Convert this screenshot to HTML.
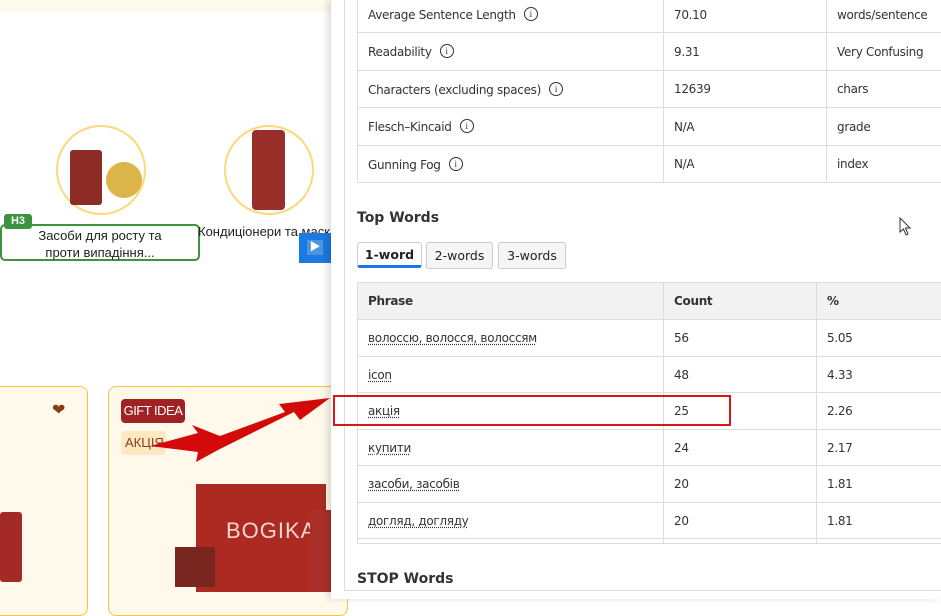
<!DOCTYPE html>
<html><head><meta charset="utf-8"><style>
*{margin:0;padding:0;box-sizing:border-box}
body{width:941px;height:599px;overflow:hidden;background:#fff;font-family:"Liberation Sans","Noto Sans CJK SC",sans-serif;position:relative}
.abs{position:absolute}
table{border-collapse:collapse;position:absolute;left:357px;table-layout:fixed}
td,th{border:1px solid #ddd;padding:0 10px;text-align:left;font-family:"DejaVu Sans",sans-serif;font-size:12px;color:#333;font-weight:normal;letter-spacing:-0.3px;white-space:nowrap;overflow:hidden}
th{background:#f2f2f2;font-weight:bold}
.i{display:inline-block;width:14px;height:14px;border:1.3px solid #333;border-radius:50%;font-size:9px;text-align:center;line-height:12px;margin-left:8px;vertical-align:2px;font-family:"Liberation Serif",serif}
.u{text-decoration:underline dotted;text-underline-offset:2px}
</style></head><body>
<div class="abs" style="left:0;top:0;width:331px;height:12px;background:#fffaee"></div>
<div class="abs" style="left:56px;top:125px;width:90px;height:90px;border:2px solid #fcd87a;border-radius:50%;background:#fff"></div>
<div class="abs" style="left:70px;top:150px;width:32px;height:55px;background:#8d2b25;border-radius:3px"></div>
<div class="abs" style="left:106px;top:162px;width:36px;height:36px;background:#dcb54a;border-radius:50%"></div>
<div class="abs" style="left:224px;top:125px;width:90px;height:90px;border:2px solid #fcd87a;border-radius:50%;background:#fff"></div>
<div class="abs" style="left:252px;top:130px;width:33px;height:80px;background:#9a2e28;border-radius:4px"></div>
<div class="abs" style="left:0;top:224px;width:200px;height:37px;border:2px solid #3c9340;border-radius:5px;font-size:13px;color:#222;text-align:center;line-height:17px;padding-top:1px">Засоби для росту та<br>проти випадіння...</div>
<div class="abs" style="left:4px;top:214px;width:28px;height:15px;background:#3c9340;color:#fff;font-size:11px;font-weight:bold;text-align:center;line-height:15px;border-radius:3px">H3</div>
<div class="abs" style="left:198px;top:224px;font-size:13px;color:#222;white-space:nowrap">Кондиціонери та маск</div>
<div class="abs" style="left:299px;top:233px;width:32px;height:30px;background:#1a7ae0"></div>
<div class="abs" style="left:307px;top:240px;width:16px;height:15px;background:#4a95de;color:#fff;font-size:11px;line-height:15px;text-align:center">▶</div>
<div class="abs" style="left:-10px;top:386px;width:98px;height:230px;border:1.5px solid #f5c542;border-radius:8px;background:#fff9ec"></div>
<div class="abs" style="left:52px;top:400px;font-size:16px;color:#8a3a10">❤</div>
<div class="abs" style="left:0;top:512px;width:22px;height:70px;background:#a32a26;border-radius:3px"></div>
<div class="abs" style="left:108px;top:386px;width:240px;height:230px;border:1.5px solid #f5c542;border-radius:8px;background:#fff9ec"></div>
<div class="abs" style="left:121px;top:399px;width:64px;height:24px;background:#a12223;border-radius:4px;color:#fff;font-size:13px;line-height:24px;text-align:center;letter-spacing:-0.5px">GIFT IDEA</div>
<div class="abs" style="left:121px;top:431px;width:45px;height:24px;background:#fde8bf;border-radius:4px;color:#8a3a20;font-size:13px;line-height:24px;padding-left:4px">АКЦІЯ</div>
<div class="abs" style="left:196px;top:484px;width:130px;height:108px;background:#ac2a22"></div>
<div class="abs" style="left:226px;top:518px;color:#f0d8d0;font-size:22px;letter-spacing:1px">BOGIKA</div>
<div class="abs" style="left:175px;top:547px;width:40px;height:40px;background:#7a2620"></div>
<div class="abs" style="left:310px;top:510px;width:22px;height:82px;background:#a83028"></div>
<svg class="abs" style="left:0;top:0" width="941" height="599"><polygon fill="#d40a0a" points="150,446 198,433 192,425 220,436 285,412 279,404 330,398 300,420 294,412 218,450 196,462 198,452" /></svg>
<div class="abs" style="left:331px;top:0;width:610px;height:599px;background:#fff;box-shadow:-4px 0 6px rgba(0,0,0,.12)"></div>
<div class="abs" style="left:344px;top:0;width:1px;height:590px;background:#ddd"></div>
<div class="abs" style="left:344px;top:590px;width:597px;height:1px;background:#ddd"></div>
<table style="top:-4px;width:600px">
<colgroup><col style="width:306px"><col style="width:163px"><col></colgroup>
<tr style="height:36px"><td>Average Sentence Length<span class="i">i</span></td><td>70.10</td><td>words/sentence</td></tr>
<tr style="height:38px"><td>Readability<span class="i">i</span></td><td>9.31</td><td>Very Confusing</td></tr>
<tr style="height:37px"><td>Characters (excluding spaces)<span class="i">i</span></td><td>12639</td><td>chars</td></tr>
<tr style="height:38px"><td>Flesch–Kincaid<span class="i">i</span></td><td>N/A</td><td>grade</td></tr>
<tr style="height:37px"><td>Gunning Fog<span class="i">i</span></td><td>N/A</td><td>index</td></tr>
</table>
<div class="abs" style="left:357px;top:210px;font-family:'DejaVu Sans',sans-serif;font-weight:bold;font-size:14px;color:#333">Top Words</div>
<div class="abs" style="left:357px;top:242px;width:65px;height:26px;border:1px solid #ccc;border-bottom:3px solid #1a73e8;border-radius:3px;font-family:'DejaVu Sans',sans-serif;font-size:12.5px;text-align:center;line-height:24px;color:#222;font-weight:bold">1-word</div>
<div class="abs" style="left:426px;top:242px;width:67px;height:27px;border:1px solid #ccc;border-radius:3px;background:#f5f5f5;font-family:'DejaVu Sans',sans-serif;font-size:12.5px;text-align:center;line-height:25px;color:#222">2-words</div>
<div class="abs" style="left:498px;top:242px;width:68px;height:27px;border:1px solid #ccc;border-radius:3px;background:#f5f5f5;font-family:'DejaVu Sans',sans-serif;font-size:12.5px;text-align:center;line-height:25px;color:#222">3-words</div>
<table style="top:282px;width:600px">
<colgroup><col style="width:306px"><col style="width:153px"><col></colgroup>
<tr style="height:37px"><th>Phrase</th><th>Count</th><th>%</th></tr>
<tr style="height:37px"><td class="u">волоссю, волосся, волоссям</td><td>56</td><td>5.05</td></tr>
<tr style="height:36px"><td class="u">icon</td><td>48</td><td>4.33</td></tr>
<tr style="height:37px"><td class="u">акція</td><td>25</td><td>2.26</td></tr>
<tr style="height:36px"><td class="u">купити</td><td>24</td><td>2.17</td></tr>
<tr style="height:37px"><td class="u">засоби, засобів</td><td>20</td><td>1.81</td></tr>
<tr style="height:36px"><td class="u">догляд, догляду</td><td>20</td><td>1.81</td></tr>
<tr style="height:5px"><td></td><td></td><td></td></tr>
</table>
<div class="abs" style="left:333px;top:395px;width:398px;height:31px;border:2px solid #d81818"></div>
<div class="abs" style="left:357px;top:571px;font-family:'DejaVu Sans',sans-serif;font-weight:bold;font-size:14px;color:#333">STOP Words</div>
<svg class="abs" style="left:899px;top:217px" width="14" height="20"><path d="M1,1 L1,15 L4.5,12 L7,18 L9,17 L6.5,11 L11,11 Z" fill="#fff" stroke="#333" stroke-width="1"/></svg>
</body></html>
